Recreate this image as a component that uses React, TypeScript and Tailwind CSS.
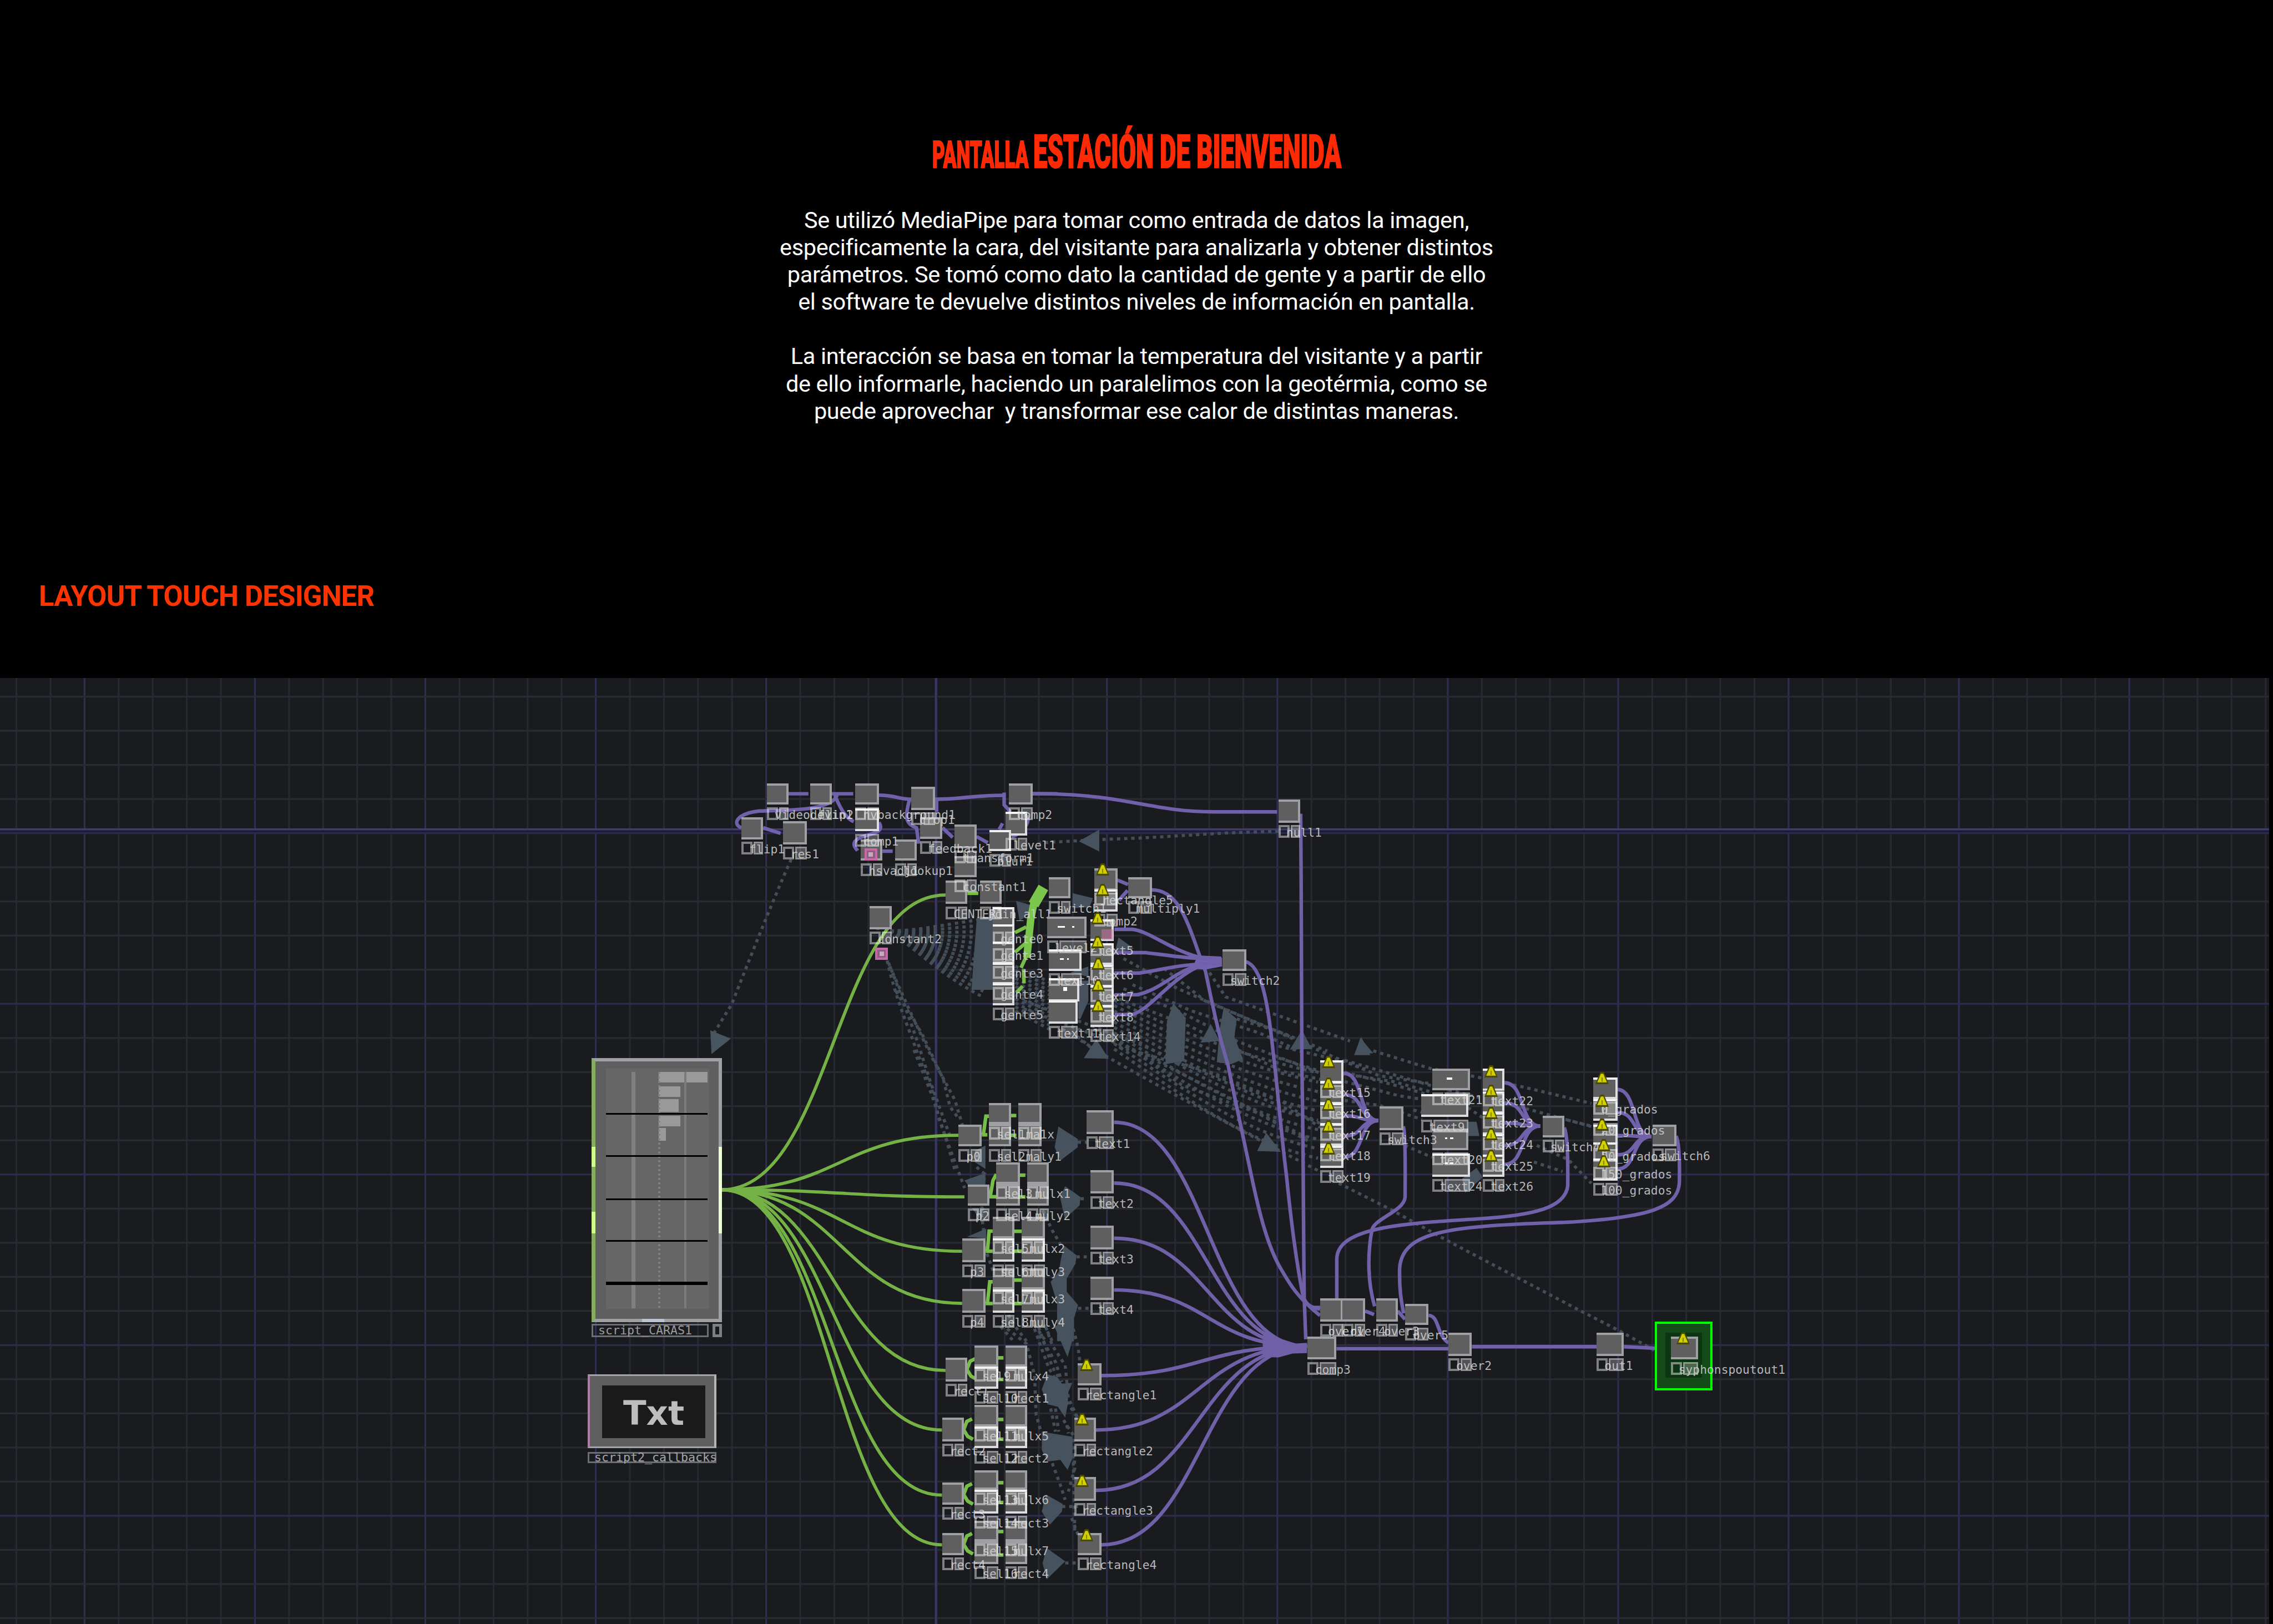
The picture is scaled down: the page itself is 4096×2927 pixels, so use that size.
import React from "react";

/* Canvas units to screen pixels */
const K = 4096 / 5760;
const TOP = 1719;

type Pt = [number, number];
type Node = [number, number, number, number, string?, boolean?];
type Cluster = {
  o: Pt;
  s: Pt;
  nodes?: Node[];
  warn?: Pt[];
  purple?: string[];
  green?: string[];
  dots?: string[];
  arrows?: string[];
  pink?: Pt[];
  marks?: [number, number, number, number][];
};

const fan = (x: number, ys: number[], tx: number, ty: number) =>
  ys.map((y) => `M${x},${y} C${(x + tx) / 2 + 10},${y} ${(x + tx) / 2 - 10},${ty} ${tx},${ty}`);

const column = (x: number, w: number, h: number, bottoms: number[], labels: string[]): Node[] =>
  bottoms.map((b, i) => [x, b - h, w, h, labels[i], true]);

const split = (x: number, y: number): string[] => [
  `M${x},${y} L${x + 20},${y - 50} L${x + 52},${y - 65}`,
  `M${x},${y} L${x + 25},${y + 40} L${x + 58},${y + 58}`,
];

const inputCluster: Cluster = {
  o: [1780, 1920],
  s: [0.574, 0.4464],
  nodes: [
    [284, 147, 96, 122, "videodevin1"],
    [476, 147, 95, 122, "flip2"],
    [675, 147, 104, 122, "nvbackground1"],
    [922, 167, 104, 132, "crop1"],
    [1353, 147, 105, 122, "comp2"],
    [675, 290, 104, 130, "comp1", true],
    [172, 340, 96, 125, "flip1"],
    [355, 362, 105, 132, "res1"],
    [962, 340, 96, 124, "feedback1"],
    [1114, 382, 96, 135, "transform1"],
    [1338, 310, 96, 133, "level1", true],
    [1266, 412, 96, 122, "blur1", true],
    [699, 465, 96, 122, "hsvadj1"],
    [851, 465, 95, 122, "lookup1"],
    [1114, 560, 96, 120, "constant1"],
    [1074, 701, 96, 132, "CENTER1"],
    [1226, 701, 96, 132, "join_all1"],
    [739, 845, 96, 132, "constant2"],
    ...column(1282, 96, 125, [975, 1072, 1172, 1290, 1408], ["gente0", "gente1", "gente3", "gente4", "gente5"]),
  ],
  pink: [
    [715, 516],
    [763, 1080],
  ],
  purple: [
    "M380,207H468",
    "M571,207H666",
    "M779,215 C850,215 870,238 922,238",
    "M1026,238 C1150,238 1180,216 1330,216",
    "M595,215 C570,300 400,300 250,305 C150,320 130,380 172,400",
    "M585,215 C610,300 640,350 668,365",
    "M268,400 L345,432",
    "M779,370 C810,430 740,430 690,460 C650,490 680,520 685,530",
    "M915,238 C890,350 900,380 945,400 L955,490",
    "M1034,240V310",
    "M795,533H840",
    "M1060,400L1105,455",
    "M1210,450L1260,485",
    "M1332,200V270L1360,310",
    "M1434,330C1450,380 1400,440 1365,450",
    "M1325,375L1310,410",
    "M1458,207H1568",
  ],
  green: ["M1170,772H1218"],
  dots: [
    "M392,580 C340,720 200,1170 130,1400 L50,1568",
    "M775,880 L775,1000",
    ...Array.from({ length: 14 }, (_, i) => `M830,985 C960,${985 + i * 10} 1080,${945 + i * 24} 1240,${920 + i * 34}`),
  ],
  arrows: [
    "1212,905 1285,905 1285,1320 1188,1320 1200,1100",
    "1385,815 1480,850 1400,930",
  ],
};

const controlCluster: Cluster = {
  o: [2200, 2260],
  s: [0.829, 0.574],
  dots: [
    "M58,305 C75,420 110,560 135,650 C170,800 200,860 215,1000 L295,1310",
    "M62,315 C95,430 125,560 150,660 L190,840 L250,1080",
    "M66,330 L125,520 L190,720 L265,920 L290,1040",
    "M85,440 L165,630 L230,830 L250,950 L275,1000",
    "M140,700 L195,900 L240,1100 L265,1230",
    ...Array.from({ length: 12 }, (_, i) => `M450,${330 + i * 18} L555,${400 + i * 19}`),
    ...Array.from({ length: 10 }, (_, i) => `M752,${480 + i * 24} C950,${620 + i * 30} 1150,${730 + i * 42} 1375,${800 + i * 42}`),
    "M640,640 L690,700",
  ],
};

const textCluster: Cluster = {
  o: [2380, 2150],
  s: [0.5485, 0.3571],
  nodes: [
    [507, 205, 100, 153, "switch1"],
    [716, 142, 108, 158, "rectangle5"],
    [716, 295, 108, 155, "comp2", true],
    [873, 205, 110, 153, "multiply1"],
    [498, 487, 184, 153, "level2"],
    [507, 718, 150, 153, "text10", true],
    [507, 925, 140, 165, undefined, true],
    [507, 1080, 133, 165, "text11", true],
    ...column(698, 108, 155, [660, 830, 985, 1130, 1270], ["text5", "text6", "text7", "text8", "text14"]),
    [1308, 718, 110, 153, "switch2"],
  ],
  warn: [
    [754, 152],
    [754, 296],
    [732, 500],
    [732, 668],
    [735, 820],
    [735, 975],
    [735, 1122],
  ],
  marks: [
    [548, 552, 34, 13],
    [613, 552, 12, 13],
    [557, 783, 18, 12],
    [590, 783, 10, 12],
    [573, 988, 18, 26],
  ],
  green: [
    "M350,600L402,560",
    "M350,740L410,660",
    "M402,770L378,850",
    "M390,860L392,960",
    "M385,980L358,1025",
  ],
};

const middleCluster: Cluster = {
  o: [2560, 2180],
  s: [0.574, 0.5102],
  purple: [
    "M473,100L520,122",
    "M480,200L518,152",
    "M460,345H540 C620,355 720,460 860,490",
    "M460,461H600 C700,475 800,492 935,496",
    "M460,562H570 C680,545 740,515 935,515",
    "M460,670H560 C680,640 730,540 860,520",
    "M460,768H540 C620,740 700,600 830,530",
  ],
  dots: [
    "M230,840 L430,980 L700,1150 L980,1320 L1130,1410 L1370,1550",
    "M60,740 L540,940 L1000,1200 L1320,1400",
    "M60,700 L540,900 L1000,1130 L1370,1310",
    "M460,880 L760,1120 L1100,1260 L1330,1390",
    "M480,690 L800,830 L1200,1050 L1370,1090",
    "M500,640 L760,760 L1000,900 L1370,1060",
    "M540,620 L800,750 L1100,860 L1300,960",
    "M680,540 L860,700 L1130,830 L1430,980 L1568,1040",
    "M500,490 L740,640 L1050,790 L1240,880",
    "M880,560 L950,680 L1250,800 L1500,900",
    "M1000,790 L1180,850 L1400,950",
    "M480,930 L900,1060 L1200,1200 L1370,1330",
  ],
  arrows: [
    "720,712 775,785 768,1000 685,1015 692,800",
    "942,735 1000,790 990,880 1028,990 975,1015 912,1005 925,840",
    "885,815 925,900 840,908",
    "1288,845 1332,940 1235,942",
    "1550,880 1590,970 1518,970",
    "1130,1355 1195,1450 1090,1446",
    "380,890 435,988 325,985",
    "275,165 365,190 350,235 275,240",
    "478,385 545,440 460,468",
    "300,600 345,600 345,700 310,790 300,790",
    "265,560 345,530 345,580",
  ],
};

const outCluster: Cluster = {
  o: [2560, 1940],
  s: [0.574, 0.3333],
  nodes: [[1184, 259, 97, 178, "null1"]],
  purple: ["M92,216H140 C520,225 620,355 900,355H1178"],
  dots: ["M1185,503 C900,510 700,550 440,562 L130,590"],
  arrows: ["303,578 393,490 393,657"],
};

const stack = (
  x: number,
  w: number,
  y: number,
  mid: number,
  bottom: number,
  a: string,
  b: string,
  bright = true,
): Node[] => [
  [x, y, w, mid - y, a],
  [x, mid, w, bottom - mid, b, bright],
];

const pointCluster: Cluster = {
  o: [2340, 2740],
  s: [0.4082, 0.4209],
  nodes: [
    [218, 265, 145, 130, "p0"],
    ...stack(408, 135, 133, 262, 395, "sel1", "sel2", false),
    ...stack(588, 146, 133, 262, 395, "ma1x", "maly1", false),
    [1014, 177, 169, 142, "text1"],
    [274, 623, 135, 130, "p2"],
    ...stack(453, 146, 492, 622, 753, "sel3", "sel4", false),
    ...stack(644, 135, 492, 622, 753, "mulx1", "muly2", false),
    [1036, 537, 147, 142, "text2"],
    [240, 950, 147, 142, "p3"],
    ...stack(430, 135, 820, 950, 1090, "sel5", "sel6"),
    ...stack(610, 146, 820, 950, 1090, "mulx2", "muly3"),
    [1036, 873, 147, 142, "text3"],
    [240, 1254, 147, 142, "p4"],
    ...stack(430, 135, 1130, 1255, 1397, "sel7", "sel8"),
    ...stack(610, 146, 1130, 1255, 1397, "mulx3", "muly4"),
    [1036, 1178, 147, 142, "text4"],
  ],
  green: [
    "M363,325H397",
    "M372,325L388,213H408",
    "M543,209H577",
    "M543,328H577",
    "M409,698H455",
    "M415,695L432,600L453,562",
    "M599,568H633",
    "M599,699H633",
    "M387,1026H430",
    "M397,1026L408,905H430",
    "M565,906H610",
    "M565,1026H610",
    "M387,1341H430",
    "M397,1341L412,1210H430",
    "M565,1200H610",
    "M565,1341H610",
  ],
  dots: [
    "M330,520 L380,560 L360,800 L380,950",
    "M740,780 L800,900 L860,1000",
    "M958,370H1014",
    "M975,710H1014",
    "M950,1060H1014",
    "M960,1370H1036",
    "M380,1000 L540,1440 L640,1568",
    "M480,1480 L560,1568",
    "M690,1470 L760,1568",
    "M750,1470 L800,1568",
  ],
  arrows: [
    "838,275 958,350 958,400 850,480 815,400",
    "880,635 975,700 970,750 878,830 848,700",
    "870,990 950,1050 945,1100 890,1190 890,1270 960,1350 935,1430 935,1568 830,1568 830,1340 790,1210 840,1150",
    "320,420 385,390 385,530 320,490",
    "255,600 385,555 385,625 275,625",
    "270,940 390,890 390,950",
    "300,765 380,765 350,830",
  ],
};

const rectCluster: Cluster = {
  o: [2340, 3360],
  s: [0.4082, 0.4209],
  nodes: [
    [138, 195, 135, 142, "rect1"],
    ...stack(318, 147, 119, 248, 381, "sel9", "sel10"),
    ...stack(510, 134, 119, 248, 381, "mulx4", "rect1"),
    [958, 228, 147, 132, "rectangle1"],
    [116, 555, 135, 142, "rect2"],
    ...stack(318, 147, 479, 608, 740, "sel11", "sel12"),
    ...stack(510, 134, 479, 608, 740, "mulx5", "rect2"),
    [936, 555, 135, 142, "rectangle2"],
    [116, 947, 135, 132, "rect3"],
    ...stack(318, 147, 871, 990, 1132, "sel13", "sel14"),
    ...stack(510, 134, 871, 990, 1132, "mulx6", "rect3"),
    [936, 914, 135, 142, "rectangle3"],
    [116, 1251, 135, 132, "rect4"],
    ...stack(318, 147, 1175, 1300, 1437, "sel15", "sel16", false),
    ...stack(510, 134, 1175, 1300, 1437, "mulx7", "rect4", false),
    [958, 1251, 147, 132, "rectangle4"],
  ],
  warn: [
    [1014, 238],
    [986, 566],
    [986, 935],
    [1014, 1262],
  ],
  green: [
    ...split(270, 265),
    ...split(250, 628),
    ...split(250, 1018),
    ...split(250, 1318),
    ...[195, 325, 566, 685, 947, 1066, 1241, 1382].map((y) => `M455,${y}H497`),
  ],
  dots: [
    "M520,20 L640,110 L690,300 L700,540 L730,640",
    "M690,20 L730,130 L780,260 L830,340",
    "M715,10 L760,130 L800,250 L850,330",
    "M760,10 L800,120 L880,240 L900,440 L960,560",
    "M930,20 L960,130 L970,210",
    "M720,60 L820,220 L860,340",
    "M890,460 L960,560",
    "M790,500 L820,640",
    "M820,500 L840,640",
    "M870,570 L930,660 L940,860 L900,1000",
    "M800,830 L850,960 L880,1050",
    "M930,780 L940,1250",
    "M890,600 L900,650",
    "M860,1090 H960",
    "M880,1430 H958",
    "M920,1160 L960,1260",
  ],
  arrows: [
    "810,0 930,0 925,90 895,190",
    "770,295 830,310 860,350 925,345 900,400 895,480 880,555 835,490 770,475 735,385",
    "735,640 925,670 925,800 895,870 850,810 770,820 735,750",
    "760,1018 865,1075 860,1120 785,1200 735,1120",
    "765,1340 880,1420 765,1530 740,1430",
  ],
};

const outputCluster: Cluster = {
  o: [3240, 2640],
  s: [0.727, 0.5995],
  nodes: [
    ...column(145, 82, 95, [175, 265, 355, 442, 535], ["text15", "text16", "text17", "text18", "text19"]),
    [352, 275, 83, 100, "switch3"],
    [535, 115, 132, 92, "text21"],
    [498, 222, 164, 98, "text9", true],
    [535, 368, 127, 92, "text20"],
    [535, 475, 132, 98, "text24", true],
    ...column(712, 76, 94, [210, 305, 395, 487, 573], ["text22", "text23", "text24", "text25", "text26"]),
    [920, 315, 76, 90, "switch4"],
    ...column(1097, 84, 92, [245, 335, 445, 520, 588], ["0_grados", "20_grados", "50_grados", "150_grados", "100_grados"]),
    [1304, 352, 82, 92, "switch6"],
    [145, 1087, 80, 97, "over1"],
    [222, 1087, 80, 97, "over4"],
    [340, 1087, 75, 97, "over3"],
    [441, 1109, 82, 91, "over5"],
    [100, 1247, 102, 98, "comp3"],
    [592, 1232, 82, 98, "over2"],
    [1109, 1232, 95, 98, "out1"],
    [1367, 1247, 95, 98, "syphonspoutout1"],
  ],
  warn: [
    ...[88, 178, 268, 358, 452].map((y): Pt => [175, y]),
    ...[126, 210, 302, 392, 483].map((y): Pt => [741, y]),
    [1128, 155],
    [1128, 250],
    [1128, 352],
    [1134, 438],
    [1134, 507],
    [1411, 1255],
  ],
  marks: [
    [586, 153, 20, 8],
    [580, 406, 8, 7],
    [598, 406, 12, 7],
    [580, 512, 10, 7],
    [598, 512, 12, 7],
  ],
  purple: [
    ...fan(228, [135, 225, 315, 400, 490], 348, 335),
    ...fan(788, [175, 260, 345, 440, 520], 912, 358),
    ...fan(1180, [203, 300, 398, 480, 540], 1300, 402),
    "M435,360 Q443,380 441,660 C435,720 330,750 325,800 C310,900 310,1020 335,1120",
    "M996,365 Q1010,400 1008,610 C1000,700 900,735 700,750 C450,770 205,780 203,920V1130",
    "M1386,400 Q1400,440 1397,600 C1390,700 1300,745 1000,765 C600,780 430,800 422,960 C420,1060 430,1110 436,1150",
    "M302,1140L333,1155",
    "M415,1140L441,1175",
    "M523,1158 C560,1160 550,1240 592,1275",
    "M202,1299H592",
    "M674,1291H1109",
    "M1204,1291L1360,1300",
    "M110,1125H145",
  ],
  dots: [
    "M210,600 L390,710 L600,850 L1030,1125 L1190,1225 L1360,1340",
    "M330,40 L530,115 L690,150 L860,195 L1090,262",
    "M0,20 L230,85 L350,145 L535,180",
    "M0,70 L130,120 L400,170 L535,215",
    "M230,80 L540,190 L880,290 L1090,360",
    "M230,170 L420,230 L500,245",
    "M230,130 L420,190 L520,225",
    "M230,250 L350,270 L500,330",
    "M440,440 L535,490",
    "M660,280 L720,330",
    "M890,510 L990,550",
    "M900,440 L1010,500 L1090,600",
    "M1000,330 L1095,360",
    "M470,290 L500,300",
  ],
  arrows: [
    "285,-15 330,50 265,55",
    "660,340 690,340 700,400 660,400",
    "690,535 712,575 650,640 640,580",
  ],
};

const clusters = [
  inputCluster,
  controlCluster,
  textCluster,
  middleCluster,
  outCluster,
  pointCluster,
  rectCluster,
  outputCluster,
];

const comp3Wires = [
  [2823, 2845],
  [2823, 2999],
  [2823, 3139],
  [2823, 3270],
  [2791, 3487],
  [2777, 3625],
  [2777, 3778],
  [2791, 3916],
].map(([x, y]) => {
  const m = (x + 3300) / 2;
  return `M${x},${y} C${m},${y} ${m},3413 3312,3413`;
});

const scriptWires = [
  [2396, 2269],
  [2429, 2878],
  [2444, 3034],
  [2438, 3172],
  [2438, 3304],
  [2396, 3474],
  [2387, 3625],
  [2387, 3790],
  [2387, 3916],
].map(([x, y]) => {
  const m = (x + 1828) / 2;
  return `M1828,3016 C${m},3016 ${m},${y} ${x},${y}`;
});

const columnsX = Array.from({ length: 67 }, (_, i) => i - 2);
const rowsY = Array.from({ length: 28 }, (_, i) => i - 4);

function Grid() {
  return (
    <g>
      {columnsX.map((k) => (
        <rect key={k} x={212 + k * 86.36} y={TOP} width={4.6} height={2400} fill={k % 5 === 0 ? "#2e2e52" : "#262931"} />
      ))}
      {rowsY.map((k) => (
        <rect key={k} x={0} y={2110 + k * 86.5} width={5750} height={4.6} fill={k % 5 === 0 ? "#2c2c4e" : "#282b31"} />
      ))}
      <rect x={2369} y={TOP} width={5} height={2400} fill="#3a3668" />
      <rect x={0} y={2103} width={5750} height={10} fill="#1c1c33" />
      <rect x={0} y={2100} width={5750} height={5} fill="#3f3c6d" />
      <rect x={0} y={2110} width={5750} height={3} fill="#2c2b4a" />
    </g>
  );
}

function Wires() {
  const tf = (c: Cluster) => `translate(${c.o[0]} ${c.o[1]}) scale(${c.s[0]} ${c.s[1]})`;
  return (
    <svg className="absolute inset-0 h-full w-full" viewBox="0 1719 5760 2397" preserveAspectRatio="none" fill="none">
      <Grid />
      {clusters.map((c, i) => (
        <g key={i} transform={tf(c)}>
          {c.dots?.map((d, j) => (
            <path key={j} d={d} stroke="#434e59" strokeWidth={5.5} strokeDasharray="6 7" vectorEffect="non-scaling-stroke" />
          ))}
          {c.arrows?.map((p, j) => (
            <polygon key={j} points={p} fill="#46535f" />
          ))}
        </g>
      ))}
      <path d="M1650,3075 V3150" stroke="#434e59" strokeWidth={9} strokeDasharray="8 10" />
      <polygon points="1800,2612 1852,2633 1803,2672" fill="#46555f" />
      <g stroke="#6f60a8" strokeWidth={9}>
        <path d="M3296,2063 C3298,2300 3299,2600 3299,2700 C3303,2900 3302,3000 3305,3290 L3309,3395" />
        <path d="M2919,2256 C2985,2256 3008,2333 3039,2420 L3055,2463 C3075,2560 3090,2630 3112,2700 C3130,2790 3150,2880 3171,2980 C3190,3070 3210,3150 3240,3206 C3270,3260 3290,3290 3345,3335" />
        <path d="M3157,2438 C3200,2450 3215,2560 3226,2665 C3240,2780 3245,2860 3260,2980 C3270,3080 3285,3200 3302,3285 Q3310,3315 3345,3318" />
        {comp3Wires.map((d) => (
          <path key={d} d={d} />
        ))}
      </g>
      <polygon points="3240,3392 3284,3406 3312,3404 3312,3430 3276,3431 3240,3441 3200,3440 3200,3385" fill="#6f60a8" />
      <polygon points="3036,2422 3095,2425 3097,2450 3054,2458 3020,2456" fill="#7463b3" />
      <g stroke="#74b246" strokeWidth={8}>
        {scriptWires.map((d) => (
          <path key={d} d={d} />
        ))}
      </g>
      {clusters.map((c, i) => (
        <g key={i} transform={tf(c)} strokeWidth={6.4}>
          {c.purple?.map((d, j) => (
            <path key={j} d={d} stroke="#7061aa" vectorEffect="non-scaling-stroke" />
          ))}
          {c.green?.map((d, j) => (
            <path key={j} d={d} stroke="#77bd48" vectorEffect="non-scaling-stroke" />
          ))}
        </g>
      ))}
      <g stroke="#7bc64c">
        <path d="M2644,2250 L2619,2293" strokeWidth={28} />
        <path d="M2622,2280 L2612,2330 L2602,2428" strokeWidth={19} />
      </g>
    </svg>
  );
}

function Body({ c, n }: { c: Cluster; n: Node }) {
  const edge = n[5] ? "border-t-[#f2f2f2] border-r-[#dcdcdf] border-b-[#dcdcdf]" : "border-[#9fa0a4]";
  return (
    <div
      className={`absolute border-t-4 border-r-4 border-b-4 bg-[#5f5f5f] ${edge}`}
      style={{
        left: (c.o[0] + n[0] * c.s[0]) * K,
        top: (c.o[1] + n[1] * c.s[1] - TOP) * K,
        width: n[2] * c.s[0] * K,
        height: n[3] * c.s[1] * K,
      }}
    />
  );
}

function Label({ c, n }: { c: Cluster; n: Node }) {
  if (!n[4]) return null;
  return (
    <div
      className="absolute flex h-[23px] items-center"
      style={{
        left: (c.o[0] + n[0] * c.s[0]) * K,
        top: (c.o[1] + (n[1] + n[3]) * c.s[1] + 6 - TOP) * K,
        width: n[2] * c.s[0] * K,
      }}
    >
      <span className="h-full w-5 shrink-0 border-4 border-white/45" />
      <span className="ml-0.5 h-full flex-1 border-[3px] border-white/35 bg-white/25" />
      <span className="absolute top-[3px] left-[14px] font-['DejaVu_Sans_Mono',monospace] text-[21.3px] leading-none whitespace-nowrap text-[#d4d4d4]/85">
        {n[4]}
      </span>
    </div>
  );
}

function Warning({ c, p }: { c: Cluster; p: Pt }) {
  return (
    <svg
      className="absolute h-[22px] w-[24px]"
      viewBox="0 0 22 20"
      style={{ left: (c.o[0] + p[0] * c.s[0]) * K - 12, top: (c.o[1] + p[1] * c.s[1] - TOP) * K - 11 }}
    >
      <path d="M8 0 H14 L17 7 L22 20 H0 L5 7 Z" fill="#4a4a00" />
      <path d="M9 3 H13 L15 8 L19 17 H3 L7 8 Z" fill="#d2d000" />
      <path d="M10 9 H12 V16 H10 Z" fill="#8a8800" />
    </svg>
  );
}

function ScriptNode() {
  const bars = ["w-[88px] h-[19px]", "w-[39px] h-[19px] mt-[7px]", "w-[36px] h-[23px] mt-[4px]", "w-[39px] h-[19px] mt-[7px]", "w-[13px] h-[23px] mt-[3px]"];
  return (
    <div className="absolute top-[685px] left-[1066px] w-[235px]">
      <div className="relative h-[476px] border-y-[6px] border-r-[6px] border-l-[7px] border-y-[#9fa0a4] border-r-[#9fa0a4] border-l-[#86ad5f] bg-[#5f5f5f] px-[19px] pt-[13px]">
        <div className="absolute top-[154px] -right-[6px] h-[156px] w-[6px] bg-[#ecffd6]" />
        <div className="absolute top-[154px] -left-[7px] h-[36px] w-[7px] bg-[#d0ff8e]" />
        <div className="absolute top-[271px] -left-[7px] h-[39px] w-[7px] bg-[#d0ff8e]" />
        <div className="relative h-[433px] w-[186px] bg-[#666666]">
          <div className="absolute top-[6px] left-[46px] h-[426px] w-[7px] bg-[#808080]" />
          <div className="absolute top-[6px] left-[95px] flex flex-col">
            {bars.map((b, i) => (
              <div key={i} className={`${b} bg-[#9a9a9a]`} />
            ))}
          </div>
          <div className="absolute top-[6px] left-[141px] h-[426px] w-[4px] bg-[#7c7c7c]" />
          <div className="absolute top-[6px] left-[94px] h-[426px] border-l-4 border-dotted border-[#858585]" />
          <div className="absolute top-[80px] left-0 h-[3px] w-[183px] bg-black" />
          <div className="absolute top-[156px] left-0 h-[3px] w-[183px] bg-black" />
          <div className="absolute top-[234px] left-0 h-[3px] w-[183px] bg-black" />
          <div className="absolute top-[309px] left-0 h-[3px] w-[183px] bg-black" />
          <div className="absolute top-[384px] left-0 h-[6px] w-[183px] bg-black" />
        </div>
        <div className="absolute -bottom-[6px] left-[84px] h-[6px] w-[40px] bg-[#b8c4d0]" />
      </div>
      <div className="mt-[3px] flex h-[24px] gap-[7px]">
        <div className="relative w-[212px] border-[3px] border-[#6d6f75] pl-[9px] font-['DejaVu_Sans_Mono',monospace] text-[21.6px] leading-[17px] text-[#9b9b9b]">
          script_CARAS1
        </div>
        <div className="w-[17px] border-[5px] border-[#7d7f84]" />
      </div>
    </div>
  );
}

function TextDatNode() {
  return (
    <div className="absolute top-[1255px] left-[1059px] w-[232px]">
      <div className="h-[133px] border-y-[3px] border-r-4 border-l-4 border-y-[#a5a5a8] border-r-[#b5b5b8] border-l-[#b27aa5] bg-[#5f5f5f] px-[22px] py-[17px]">
        <div className="flex h-[95px] w-[186px] items-center justify-center bg-[#1a1a1a] pt-1 font-['DejaVu_Sans',sans-serif] text-[61px] leading-none font-bold text-[#bdbdbd]">
          Txt
        </div>
      </div>
      <div className="mt-[7px] h-[20px] border-[3px] border-[#6d6f75] pl-[9px] font-['DejaVu_Sans_Mono',monospace] text-[21.6px] leading-[14px] whitespace-nowrap text-[#a5a5a5]">
        script2_callbacks
      </div>
    </div>
  );
}

function NetworkEditor() {
  return (
    <section className="relative h-[1705px] w-[4089px] shrink-0 overflow-hidden bg-[#1a1b1f]">
      <div className="absolute inset-y-0 left-0 w-[4096px]">
        <div className="absolute inset-x-0 top-0 h-[1704.5px]">
          <Wires />
        </div>
        <div className="absolute top-[1160px] left-[2982px] h-[124px] w-[104px] border-4 border-[#00ff00] bg-[#134a17]">
          <div className="mx-auto mt-[16px] h-[81px] w-[66px] bg-[#0e3513]" />
        </div>
        <ScriptNode />
        <TextDatNode />
        {clusters.map((c, i) => (
          <React.Fragment key={i}>
            {c.nodes?.map((n, j) => <Body key={`b${j}`} c={c} n={n} />)}
            {c.nodes?.map((n, j) => <Label key={`l${j}`} c={c} n={n} />)}
            {c.marks?.map((m, j) => (
              <div
                key={`m${j}`}
                className="absolute bg-white"
                style={{
                  left: (c.o[0] + m[0] * c.s[0]) * K,
                  top: (c.o[1] + m[1] * c.s[1] - TOP) * K,
                  width: m[2] * c.s[0] * K,
                  height: m[3] * c.s[1] * K,
                }}
              />
            ))}
            {c.pink?.map((p, j) => (
              <div
                key={`p${j}`}
                className="absolute flex h-[22px] w-[23px] items-center justify-center border-4 border-[#c868a8] bg-[#8d5f80]"
                style={{ left: (c.o[0] + p[0] * c.s[0]) * K, top: (c.o[1] + p[1] * c.s[1] - TOP) * K }}
              >
                <div className="h-2 w-2 bg-[#c9a8bf]" />
              </div>
            ))}
            {c.warn?.map((p, j) => <Warning key={`w${j}`} c={c} p={p} />)}
          </React.Fragment>
        ))}
        <div className="absolute top-[453px] left-[1985px] h-[19px] w-[21px] bg-[#d873ae]/50" />
      </div>
    </section>
  );
}

export default function App() {
  return (
    <main className="flex h-[2927px] w-[4096px] flex-col overflow-hidden bg-black font-['Roboto',sans-serif]">
      <header className="flex h-[1222px] shrink-0 flex-col">
        <h1 className="mt-[226px] flex h-[96px] items-baseline justify-center leading-[96px] font-black whitespace-nowrap text-[#ff2a05] [-webkit-text-stroke:2px_#ff2a05]">
          <span className="flex w-[182px] justify-start text-[67px]">
            <span className="origin-left scale-x-[0.522]">PANTALLA</span>
          </span>
          <span className="flex w-[554px] justify-start text-[84px]">
            <span className="origin-left scale-x-[0.54]">ESTACIÓN DE BIENVENIDA</span>
          </span>
        </h1>
        <div className="mt-[50px] flex flex-col gap-[49.1px] text-center text-[41.5px] leading-[49.1px] tracking-[-0.36px] whitespace-pre text-white">
          <p>
            Se utilizó MediaPipe para tomar como entrada de datos la imagen,
            <br />
            especificamente la cara, del visitante para analizarla y obtener distintos
            <br />
            parámetros. Se tomó como dato la cantidad de gente y a partir de ello
            <br />
            el software te devuelve distintos niveles de información en pantalla.
          </p>
          <p>
            La interacción se basa en tomar la temperatura del visitante y a partir
            <br />
            de ello informarle, haciendo un paralelimos con la geotérmia, como se
            <br />
            {"puede aprovechar  y transformar ese calor de distintas maneras."}
          </p>
        </div>
        <h2 className="mt-[280px] ml-[70px] text-[51px] leading-[60px] font-bold tracking-[-0.85px] text-[#ff3300]">
          LAYOUT TOUCH DESIGNER
        </h2>
      </header>
      <NetworkEditor />
    </main>
  );
}
